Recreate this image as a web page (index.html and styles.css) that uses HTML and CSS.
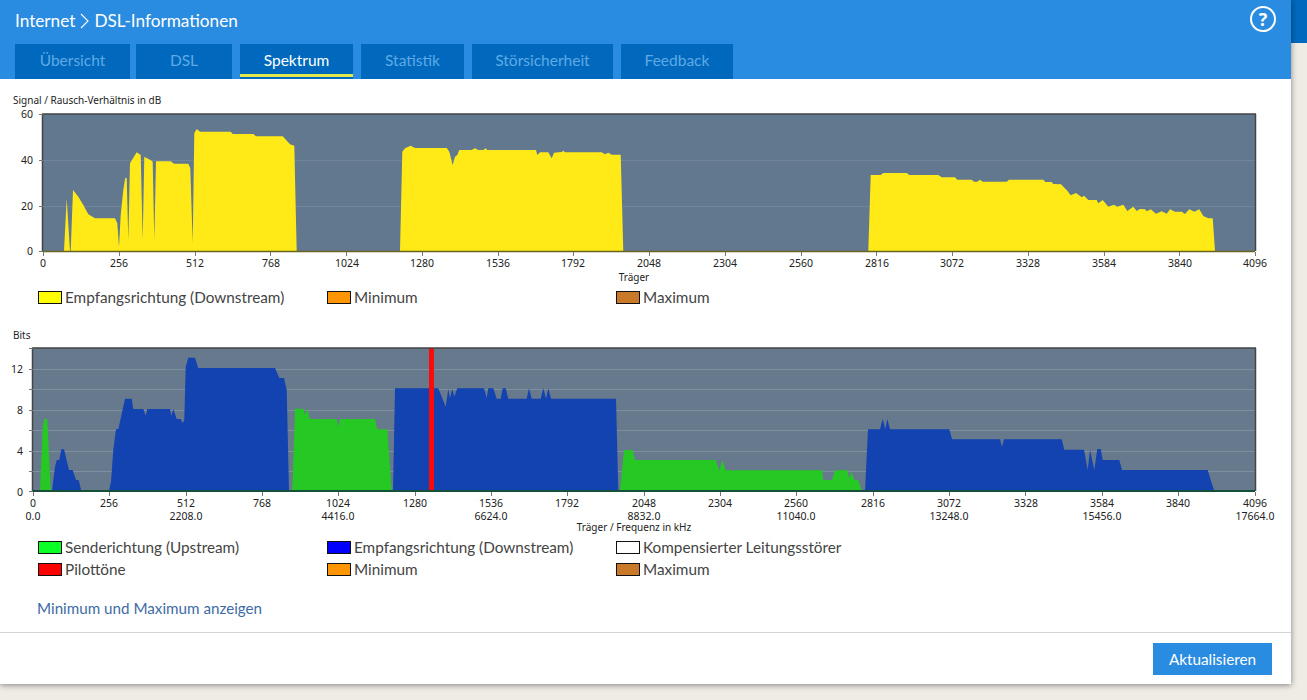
FILE: index.html
```html
<!DOCTYPE html>
<html lang="de">
<head>
<meta charset="utf-8">
<title>DSL-Informationen</title>
<link rel="stylesheet" href="styles.css">
</head>
<body>
<div class="page">
  <main class="panel">
    <header class="header">
      <div class="title-row">
        <h1 class="crumbs">
          <span>Internet</span>
          <svg class="chevron" width="9" height="16" viewBox="0 0 9 16"><path d="M1 1l7 7-7 7" fill="none" stroke="#fff" stroke-width="1.1"/></svg>
          <span>DSL-Informationen</span>
        </h1>
        <span class="help">?</span>
      </div>
      <nav class="tabs">
        <a class="tab tab-1">Übersicht</a>
        <a class="tab tab-2">DSL</a>
        <a class="tab tab-3 active">Spektrum</a>
        <a class="tab tab-4">Statistik</a>
        <a class="tab tab-5">Störsicherheit</a>
        <a class="tab tab-6">Feedback</a>
      </nav>
    </header>

    <section class="content">
      <div class="chart-title">Signal / Rausch-Verhältnis in dB</div>
      <svg class="chart chart-snr" width="1291" height="178" viewBox="0 108 1291 178">
        <rect class="plot-a" x="43" y="114" width="1212" height="137"/>
        <path class="grid-a" d="M43 160.5H1255M43 206.5H1255"/>
        <path class="fill-yellow" d="M64 251L66.7 198.3 70 251 70.7 251 73 190 78.3 196.7 83.3 205 88.3 214.3 95 218.3 115 218.3 117.3 223.3 119 246.7 120.7 215 123.3 190 125.3 177.7 126.7 178.3 128.3 240 130 163.3 136.7 152.3 140.7 155 142.7 240 144.3 156.7 151.7 160.7 152.7 161.7 154.3 240 156 161.3 170.7 161.3 174 163.7 188.3 163.7 190.3 168.3 192.7 243.3 194.3 133.3 196.7 129 200 131.7 230.7 131.7 232.7 134 253.3 134 256 136.3 282.7 136.3 290 144.3 294.3 145.7 296.7 251Z"/>
        <path class="fill-yellow" d="M400 251L402.3 151.7 405 148.3 410.7 145.7 415 148 446.7 148 449.3 151.7 452.7 165 455 156.7 457.3 155 459.3 150 471.7 150 475 148.3 478.3 150 483.3 150 485.7 148.3 487.3 150 536 150 537.3 155 540 152.3 548.3 152.3 551.7 158.3 554 152.7 561.7 152 563.3 150.7 565 152.3 601.7 152.3 605 154.3 608.3 152.7 611.7 154.7 620.7 154.7 623.3 251Z"/>
        <path class="fill-yellow" d="M868.3 251L870.7 175 880.7 175 883.3 173 906.7 173 909.3 175 938.3 175 941.7 177.3 955 177.3 957.3 179.7 971.7 179.7 974 181.7 977.3 181.7 980 179.7 982.7 181.7 1006.7 181.7 1009 179.7 1043.3 179.7 1045.3 182 1051.7 182 1053.3 184 1061 184.3 1067.3 190.7 1070.7 195.3 1076 193 1081.7 197.3 1084 195.7 1088.3 200 1096.7 200 1098.3 203.3 1102.7 200 1108.3 206.7 1114 204.7 1117.3 206.7 1123.3 204.7 1127.3 211 1133.3 206.7 1136.7 211 1140 209 1145 209.3 1146.7 211.3 1150.7 209.3 1156 213.7 1161.7 211.3 1166.7 213.7 1170 209.3 1175 211.7 1181.7 211.7 1185 214 1189.3 209.3 1194.3 211.7 1199.3 209.3 1203.3 216 1208.3 218.3 1212.7 218.3 1215 251Z"/>
        <path class="frame" d="M42 114H1256M1255.5 114V251M42.5 114V251"/>
        <path class="base-olive" d="M43 251.5H1255"/>
        <path class="tick" d="M39 114.5H43M39 160.5H43M39 206.5H43M39 251.5H43M43.5 252v4M119.5 252v4M195.5 252v4M270.5 252v4M346.5 252v4M422.5 252v4M498.5 252v4M573.5 252v4M649.5 252v4M725.5 252v4M801.5 252v4M876.5 252v4M952.5 252v4M1028.5 252v4M1104.5 252v4M1179.5 252v4M1255.5 252v4"/>
        <g class="yl">
          <text x="33" y="118">60</text><text x="33" y="164">40</text><text x="33" y="210">20</text><text x="33" y="255">0</text>
        </g>
        <g class="xl">
          <text x="43" y="267">0</text><text x="119" y="267">256</text><text x="195" y="267">512</text><text x="271" y="267">768</text><text x="347" y="267">1024</text><text x="422" y="267">1280</text><text x="498" y="267">1536</text><text x="573" y="267">1792</text><text x="649" y="267">2048</text><text x="725" y="267">2304</text><text x="801" y="267">2560</text><text x="877" y="267">2816</text><text x="952" y="267">3072</text><text x="1028" y="267">3328</text><text x="1104" y="267">3584</text><text x="1180" y="267">3840</text><text x="1255" y="267">4096</text>
          <text class="axis-name" x="634" y="281">Träger</text>
        </g>
      </svg>
      <div class="legend">
        <div class="key"><i class="swatch s-yellow"></i>Empfangsrichtung (Downstream)</div>
        <div class="key"><i class="swatch s-orange"></i>Minimum</div>
        <div class="key"><i class="swatch s-brown"></i>Maximum</div>
      </div>

      <div class="chart-title bits">Bits</div>
      <svg class="chart chart-bits" width="1291" height="195" viewBox="0 341 1291 195">
        <rect class="plot-b" x="33" y="348" width="1222" height="143"/>
        <path class="grid-b" d="M33 369.5H1255M33 389.5H1255M33 410.5H1255M33 430.5H1255M33 451.5H1255M33 471.5H1255"/>
        <path class="fill-green" d="M40 491L42.7 428.3 44.3 419 47.3 419 50.7 491Z"/>
        <path class="fill-blue" d="M52 491L55 466.7 56.7 460 59.3 460 61.3 449.3 64 449.3 69 470 72.7 470 76 480 78.7 480 81.3 491Z"/>
        <path class="fill-blue" d="M109 491L111 481.7 113.3 450 116 429.3 118.3 429.3 125 398.7 131.7 398.7 133.3 409 143.3 409 145.7 415.7 147.3 409 170 409 171.3 415.7 173.3 409 176.7 419 180.7 419 182.7 423.3 184.3 420 185.7 366.7 188.3 357.7 195 357.7 198.3 368 275 368 279.3 378 284 378 286.7 390 289 491Z"/>
        <path class="fill-green" d="M292.3 491L295 408.7 303.3 408.7 305 415 307.3 408.7 310 419 336.7 419 338.3 426.7 340 419 375 419 377.3 429.3 387.3 429.3 391.7 491Z"/>
        <path class="fill-blue" d="M393 491L395 388.3 438.3 388.3 445.7 406.7 448.3 389 450 398.3 452.3 389 454.3 396.7 457.3 388.3 484 388.3 486.7 398.3 488.3 388.3 493.3 388.3 496.7 398.7 500.7 398.7 502.7 388.3 505.7 388.3 508.3 398.7 526.7 398.7 529 388.3 531.7 398.7 540.7 398.7 543.3 388.3 546 398.7 548.3 388.3 551 398.7 616 398.7 618.3 491Z"/>
        <path class="fill-green" d="M620 491L624 450 632.7 450 635 460 716 460 719.3 470.7 722.3 460 725.7 470.3 822.3 470.3 823.3 480 832 480 835 470.3 847.3 470.3 849.3 478.3 851.7 471.7 854.3 480 858.3 480 861.7 491Z"/>
        <path class="fill-blue" d="M865 491L868 429.3 880 429.3 882.7 419 885.3 429.3 887.3 419 890 429.3 949.3 429.3 952 439.3 1000 439.3 1002 446.7 1004 439.3 1061.7 439.3 1064.3 449.7 1084 449.7 1087.7 470 1090 450 1094.3 470 1097.3 449 1100.7 449 1102.7 460 1119.3 460 1122 470 1207.7 470 1210.7 480 1214.3 491Z"/>
        <rect class="pilot" x="429" y="348" width="5" height="143"/>
        <path class="frame" d="M32 348H1256M1255.5 348V491M32.5 348V491"/>
        <path class="base-green" d="M33 491H1255"/>
        <path class="tick" d="M29 348.5H33M29 369.5H33M29 389.5H33M29 410.5H33M29 430.5H33M29 451.5H33M29 471.5H33M29 491.5H33M33.5 492v4M109.5 492v4M186.5 492v4M262.5 492v4M338.5 492v4M415.5 492v4M491.5 492v4M567.5 492v4M644.5 492v4M720.5 492v4M796.5 492v4M873.5 492v4M949.5 492v4M1025.5 492v4M1102.5 492v4M1178.5 492v4M1255.5 492v4"/>
        <g class="yl">
          <text x="23" y="373">12</text><text x="23" y="414">8</text><text x="23" y="455">4</text><text x="23" y="496">0</text>
        </g>
        <g class="xl">
          <text x="33" y="507">0</text><text x="109" y="507">256</text><text x="186" y="507">512</text><text x="262" y="507">768</text><text x="338" y="507">1024</text><text x="415" y="507">1280</text><text x="491" y="507">1536</text><text x="567" y="507">1792</text><text x="644" y="507">2048</text><text x="720" y="507">2304</text><text x="796" y="507">2560</text><text x="873" y="507">2816</text><text x="949" y="507">3072</text><text x="1026" y="507">3328</text><text x="1102" y="507">3584</text><text x="1178" y="507">3840</text><text x="1255" y="507">4096</text>
          <text x="33" y="520">0.0</text><text x="186" y="520">2208.0</text><text x="338" y="520">4416.0</text><text x="491" y="520">6624.0</text><text x="644" y="520">8832.0</text><text x="796" y="520">11040.0</text><text x="949" y="520">13248.0</text><text x="1102" y="520">15456.0</text><text x="1255" y="520">17664.0</text>
          <text class="axis-name" x="634" y="531">Träger / Frequenz in kHz</text>
        </g>
      </svg>
      <div class="legend">
        <div class="key"><i class="swatch s-green"></i>Senderichtung (Upstream)</div>
        <div class="key"><i class="swatch s-blue"></i>Empfangsrichtung (Downstream)</div>
        <div class="key"><i class="swatch s-white"></i>Kompensierter Leitungsstörer</div>
        <div class="key"><i class="swatch s-red"></i>Pilottöne</div>
        <div class="key"><i class="swatch s-orange"></i>Minimum</div>
        <div class="key"><i class="swatch s-brown"></i>Maximum</div>
      </div>
      <a class="toggle">Minimum und Maximum anzeigen</a>
    </section>

    <footer class="footer">
      <button class="refresh" type="button">Aktualisieren</button>
    </footer>
  </main>
  <div class="side"><div class="side-strip"></div></div>
</div>
</body>
</html>
```
FILE: styles.css
```css
* { box-sizing: border-box; }
html, body { margin: 0; height: 100%; }
body {
  background: #efebe5;
  font-family: "Lato", "Noto Sans", sans-serif;
  overflow: hidden;
}
.page { display: flex; height: 700px; align-items: flex-start; }
.panel {
  width: 1291px;
  height: 684px;
  flex: none;
  background: #fff;
  display: flex;
  flex-direction: column;
  box-shadow: 0 1px 6px rgba(0, 0, 0, .45);
  position: relative;
}
.side { flex: 1; }
.side-strip { height: 43px; background: #0069bd; }

.header { height: 79px; flex: none; background: #2a8ce0; padding: 0 15px; }
.title-row { height: 44px; display: flex; justify-content: space-between; align-items: flex-start; }
.crumbs {
  margin: 10px 0 0;
  display: flex;
  align-items: center;
  gap: 5px;
  font-size: 17.2px;
  line-height: 21px;
  font-weight: 400;
  color: #fff;
}
.help {
  width: 26px;
  height: 26px;
  margin: 6px 0 0;
  border: 2px solid #fff;
  border-radius: 50%;
  color: #fff;
  font-family: "Open Sans", sans-serif;
  font-weight: 700;
  font-size: 18px;
  line-height: 22px;
  text-align: center;
}
.tabs { display: flex; height: 35px; }
.tab {
  height: 35px;
  background: #0069bd;
  color: #5fa9e6;
  font-size: 15.5px;
  line-height: 32px;
  text-align: center;
}
.tab-1 { width: 115px; }
.tab-2 { width: 96px; margin-left: 6px; }
.tab-3 { width: 113px; margin-left: 8px; }
.tab-4 { width: 103px; margin-left: 8px; }
.tab-5 { width: 141px; margin-left: 8px; }
.tab-6 { width: 112px; margin-left: 8px; }
.tab.active { color: #fff; position: relative; }
.tab.active::after {
  content: "";
  position: absolute;
  left: 0;
  right: 0;
  bottom: 2px;
  height: 3px;
  background: #e3e84f;
}

.content { flex: 1; padding-top: 15px; display: flex; flex-direction: column; align-items: flex-start; }
.chart-title {
  font-family: "Noto Sans", sans-serif;
  font-size: 10px;
  line-height: 12px;
  height: 14px;
  padding-left: 13px;
  color: #222;
}
.chart-title.bits { margin-top: 19px; line-height: 16px; }
.chart { display: block; flex: none; }
.plot-a { fill: #62788f; }
.plot-b { fill: #67798d; }
.grid-a { stroke: #70849a; stroke-width: 1; fill: none; }
.grid-b { stroke: #7f8f9f; stroke-width: 1; fill: none; }
.fill-yellow { fill: #ffea17; }
.fill-green { fill: #26c823; }
.fill-blue { fill: #1243b0; }
.pilot { fill: #fa0a0a; }
.frame { stroke: #444; stroke-width: 1.5; fill: none; }
.base-olive { stroke: #6a6420; stroke-width: 1.5; fill: none; }
.base-green { stroke: #14503a; stroke-width: 2; fill: none; }
.tick { stroke: #777; stroke-width: 1; fill: none; }
.yl text, .xl text {
  font-family: "Noto Sans", sans-serif;
  font-size: 10.5px;
  fill: #222;
}
.yl text { text-anchor: end; }
.xl text { text-anchor: middle; }
.xl .axis-name { font-size: 10px; }

.legend {
  display: grid;
  grid-template-columns: repeat(3, 289px);
  grid-auto-rows: 22px;
  padding-left: 38px;
}
.key {
  display: flex;
  align-items: center;
  gap: 3px;
  font-size: 15.3px;
  line-height: 22px;
  color: #444;
  white-space: nowrap;
}
.swatch { width: 24px; height: 13px; border: 1px solid #111; flex: none; }
.s-yellow { background: #ffff00; }
.s-orange { background: #ff9500; }
.s-brown { background: #c87a29; }
.s-green { background: #0aff25; }
.s-blue { background: #0000ff; }
.s-white { background: #fff; }
.s-red { background: #ff0000; }
.toggle {
  margin: 17px 0 0 37px;
  font-size: 15.2px;
  line-height: 22px;
  color: #3e6ba5;
}

.footer {
  height: 52px;
  flex: none;
  border-top: 1px solid #d5d5d5;
  display: flex;
  justify-content: flex-end;
  padding: 10px 19px 0 0;
}
.refresh {
  width: 119px;
  height: 32px;
  border: 0;
  padding: 0;
  background: #2a8ce0;
  color: #fff;
  font-family: inherit;
  font-size: 15.3px;
}
```
